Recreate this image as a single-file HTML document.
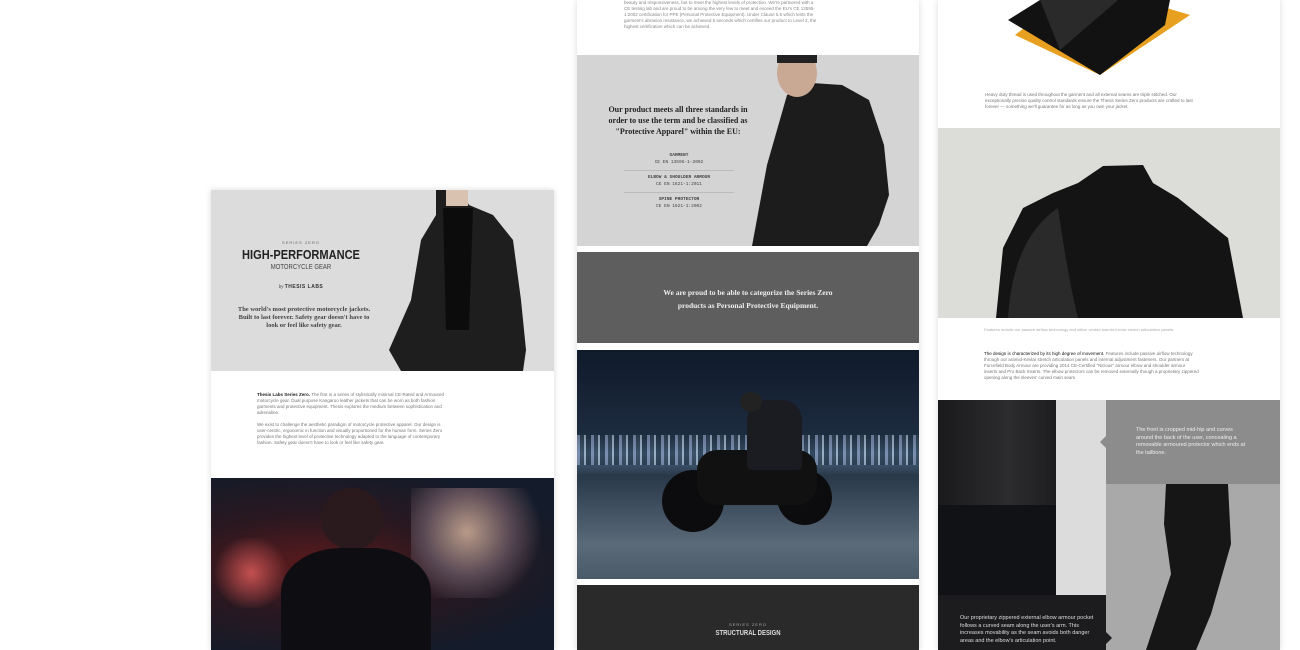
<!DOCTYPE html>
<html><head><meta charset="utf-8"><style>
*{margin:0;padding:0;box-sizing:border-box}
body{width:1300px;height:650px;background:#fff;position:relative;overflow:hidden;font-family:"Liberation Sans",sans-serif}
.a{position:absolute}
.col{box-shadow:0 0 6px rgba(0,0,0,.15)}
.serif{font-family:"Liberation Serif",serif}
.t{font-size:4.5px;line-height:6px;color:#777}
.c{text-align:center}
</style></head><body>

<!-- LEFT COLUMN -->
<div class="a col" style="left:211px;top:190px;width:343px;height:460px;background:#fff"></div>
<div class="a" style="left:211px;top:190px;width:343px;height:181px;background:#dcdcdc;overflow:hidden">
  <div class="a c" style="left:20px;top:50px;width:140px;font-size:4px;letter-spacing:1px;color:#666">SERIES ZERO</div>
  <div class="a c" style="left:10px;top:57px;width:160px;font-size:13px;font-weight:bold;color:#222;transform:scaleX(.85)">HIGH-PERFORMANCE</div>
  <div class="a c" style="left:20px;top:74px;width:140px;font-size:7px;color:#444;transform:scaleX(.85)">MOTORCYCLE GEAR</div>
  <div class="a c serif" style="left:20px;top:94px;width:140px;font-size:5px;color:#333"><i>by</i> <b style="font-family:'Liberation Sans';letter-spacing:.5px">THESIS LABS</b></div>
  <div class="a c serif" style="left:24px;top:116px;width:138px;font-size:6.5px;line-height:8px;font-weight:bold;color:#444">The world's most protective motorcycle jackets. Built to last forever. Safety gear doesn't have to look or feel like safety gear.</div>
  <svg class="a" style="left:170px;top:0" width="173" height="181"><path d="M55 0 L80 0 L88 15 L112 25 L132 50 L140 110 L145 160 L142 181 L20 181 L8 160 L30 110 L40 50 L55 25 Z" fill="#1e1e1e"/><path d="M65 0 h22 v16 h-22z" fill="#d9c2b0"/><path d="M62 18 L65 140 L88 140 L92 18Z" fill="#0c0c0c"/></svg>
</div>
<div class="a t" style="left:257px;top:392px;width:190px"><b style="color:#222">Thesis Labs Series Zero.</b> The first in a series of stylistically minimal CE-Rated and Armoured motorcycle gear. Dual purpose Kangaroo leather jackets that can be worn as both fashion garments and protective equipment. Thesis explores the medium between sophistication and adrenaline.<br><br>We exist to challenge the aesthetic paradigm of motorcycle protective apparel. Our design is user-centric, ergonomic in function and visually proportioned for the human form. Series Zero provides the highest level of protective technology adapted to the language of contemporary fashion. Safety gear doesn't have to look or feel like safety gear.</div>
<div class="a" style="left:211px;top:478px;width:343px;height:172px;background:radial-gradient(ellipse at 30% 50%,#5a1a1c 0%,#2a1820 40%,#141b2a 80%);overflow:hidden">
  <div class="a" style="left:200px;top:10px;width:140px;height:110px;background:radial-gradient(circle at 40% 40%,#b89a88,#5a4a55 40%,transparent 70%)"></div>
  <div class="a" style="left:0;top:60px;width:80px;height:70px;background:radial-gradient(circle,#c45050,transparent 70%)"></div>
  <div class="a" style="left:110px;top:10px;width:62px;height:62px;border-radius:50%;background:#2a1a1e"></div>
  <div class="a" style="left:70px;top:70px;width:150px;height:110px;border-radius:40% 40% 0 0;background:#0e0e12"></div>
</div>

<!-- MIDDLE COLUMN -->
<div class="a col" style="left:577px;top:0;width:342px;height:650px;background:#fff"></div>
<div class="a t" style="left:624px;top:0;width:195px;color:#888">beauty and responsiveness, but to meet the highest levels of protection. We're partnered with a CE testing lab and are proud to be among the very few to meet and exceed the EU's CE 13595-1:2002 certification for PPE (Personal Protective Equipment). Under Clause 5.5 which tests the garment's abrasion resistance, we achieved 6 seconds which certifies our product to Level 2, the highest certification which can be achieved.</div>
<div class="a" style="left:577px;top:55px;width:342px;height:191px;background:#d4d4d4;overflow:hidden">
  <div class="a c serif" style="left:25px;top:49px;width:152px;font-size:8px;line-height:11px;font-weight:bold;color:#222">Our product meets all three standards in order to use the term and be classified as "Protective Apparel" within the EU:</div>
  <div class="a c" style="left:47px;top:98px;width:110px;font-size:4.5px;line-height:6.5px;color:#444;font-family:'Liberation Mono',monospace"><b>GARMENT</b><br>CE EN 13595-1-2002<div style="border-top:1px solid #bbb;margin:4px 0"></div><b>ELBOW &amp; SHOULDER ARMOUR</b><br>CE EN 1621-1:2011<div style="border-top:1px solid #bbb;margin:4px 0"></div><b>SPINE PROTECTOR</b><br>CE EN 1621-1:2002</div>
  <svg class="a" style="left:170px;top:0" width="172" height="191"><path d="M5 191 L20 110 L40 40 L65 28 L95 30 L122 45 L137 90 L142 140 L132 170 L120 191Z" fill="#1c1c1c"/><ellipse cx="50" cy="18" rx="20" ry="24" fill="#c9a894"/><path d="M30 0 h40 v8 h-40z" fill="#222"/></svg>
</div>
<div class="a" style="left:577px;top:252px;width:342px;height:91px;background:#5e5e5e">
  <div class="a c serif" style="left:74px;top:34px;width:194px;font-size:7.5px;line-height:13px;font-weight:bold;color:#eee">We are proud to be able to categorize the Series Zero products as Personal Protective Equipment.</div>
</div>
<div class="a" style="left:577px;top:350px;width:342px;height:229px;background:linear-gradient(#0f1a2a 0%,#1e2c40 38%,#4a6a88 45%,#2a3848 55%,#39495a 65%,#5a6a78 85%,#4a5a68 100%);overflow:hidden">
  <div class="a" style="left:0;top:85px;width:342px;height:30px;background:repeating-linear-gradient(90deg,#9ac 0 3px,#345 3px 7px,#cde 7px 9px,#234 9px 14px);opacity:.6"></div>
  <div class="a" style="left:85px;top:120px;width:62px;height:62px;border-radius:50%;background:#0c0c0e"></div>
  <div class="a" style="left:200px;top:120px;width:55px;height:55px;border-radius:50%;background:#0c0c0e"></div>
  <div class="a" style="left:120px;top:100px;width:120px;height:55px;background:#111;border-radius:20px"></div>
  <div class="a" style="left:170px;top:50px;width:55px;height:70px;background:#1a1c22;border-radius:20px 20px 5px 5px"></div>
  <div class="a" style="left:163px;top:42px;width:22px;height:20px;border-radius:50%;background:#222"></div>
</div>
<div class="a" style="left:577px;top:585px;width:342px;height:65px;background:#2a2a2a">
  <div class="a c" style="left:0;top:37px;width:342px;font-size:4px;letter-spacing:1px;color:#aaa">SERIES ZERO</div>
  <div class="a c" style="left:0;top:45px;width:342px;font-size:7px;font-weight:bold;color:#ddd;transform:scaleX(.85)">STRUCTURAL DESIGN</div>
</div>

<!-- RIGHT COLUMN -->
<div class="a col" style="left:938px;top:0;width:342px;height:650px;background:#fff"></div>
<svg class="a" style="left:1000px;top:0" width="200" height="80"><path d="M15 35 L60 0 L140 0 L190 15 L100 75 Z" fill="#e8a020"/><path d="M8 20 L40 0 L170 0 L165 25 L100 75 Z" fill="#121212"/><path d="M40 0 L118 0 L60 50 Z" fill="#2a2a2a"/></svg>
<div class="a t" style="left:985px;top:92px;width:215px">Heavy duty thread is used throughout the garment and all external seams are triple stitched. Our exceptionally precise quality control standards ensure the Thesis Series Zero products are crafted to last forever — something we'll guarantee for as long as you own your jacket.</div>
<div class="a" style="left:938px;top:128px;width:342px;height:190px;background:#dcdcd8;overflow:hidden">
  <svg class="a" style="left:0;top:0" width="342" height="190"><path d="M58 190 L65 120 L85 80 L115 65 L140 55 L165 38 L205 37 L215 55 L240 70 L290 110 L305 190 Z" fill="#141414"/><path d="M120 80 Q130 150 140 190 L70 190 Q75 110 120 80Z" fill="#2a2a2a"/></svg>
</div>
<div class="a t" style="left:984px;top:327px;width:230px;color:#aaa;font-size:4px">Features include our passive airflow technology and utilize vented aramid-Kevlar stretch articulation panels.</div>
<div class="a t" style="left:984px;top:351px;width:215px"><b style="color:#111;font-weight:normal">The design is characterized by its high degree of movement.</b> Features include passive airflow technology through our aramid-Kevlar stretch articulation panels and internal adjustment fasteners. Our partners at Forcefield Body Armour are providing 2014 CE-Certified "Nitrous" armour elbow and shoulder armour inserts and Pro Back Inserts. The elbow protectors can be removed externally though a proprietary zippered opening along the sleeves' curved main seam.</div>
<div class="a" style="left:938px;top:400px;width:170px;height:250px;background:#dcdcdc"></div>
<div class="a" style="left:938px;top:400px;width:118px;height:200px;background:linear-gradient(90deg,#1a1a1c,#2c2c2e 60%,#1e1e20)"></div>
<div class="a" style="left:938px;top:505px;width:118px;height:95px;background:#101216"></div>
<div class="a" style="left:1106px;top:400px;width:174px;height:84px;background:#8c8c8c">
  <div class="a" style="left:30px;top:27px;width:115px;font-size:5.5px;line-height:7.5px;color:#eee">The front is cropped mid-hip and curves around the back of the user, concealing a removable armoured protector which ends at the tailbone.</div>
</div>
<div class="a" style="left:1100px;top:436px;width:0;height:0;border:6px solid transparent;border-right-color:#8c8c8c;border-left:0"></div>
<div class="a" style="left:1106px;top:484px;width:174px;height:166px;background:#a9a9a9;overflow:hidden">
  <svg width="174" height="166"><path d="M60 0 L122 0 L125 60 L105 130 L90 166 L40 166 L65 90 L58 40Z" fill="#161616"/></svg>
</div>
<div class="a" style="left:938px;top:595px;width:168px;height:55px;background:#1c1c1e">
  <div class="a" style="left:22px;top:20px;width:135px;font-size:5.5px;line-height:7.5px;color:#ddd">Our proprietary zippered external elbow armour pocket follows a curved seam along the user's arm. This increases movability as the seam avoids both danger areas and the elbow's articulation point.</div>
</div>
<div class="a" style="left:1106px;top:632px;width:0;height:0;border:6px solid transparent;border-left-color:#1c1c1e;border-right:0"></div>
</body></html>
